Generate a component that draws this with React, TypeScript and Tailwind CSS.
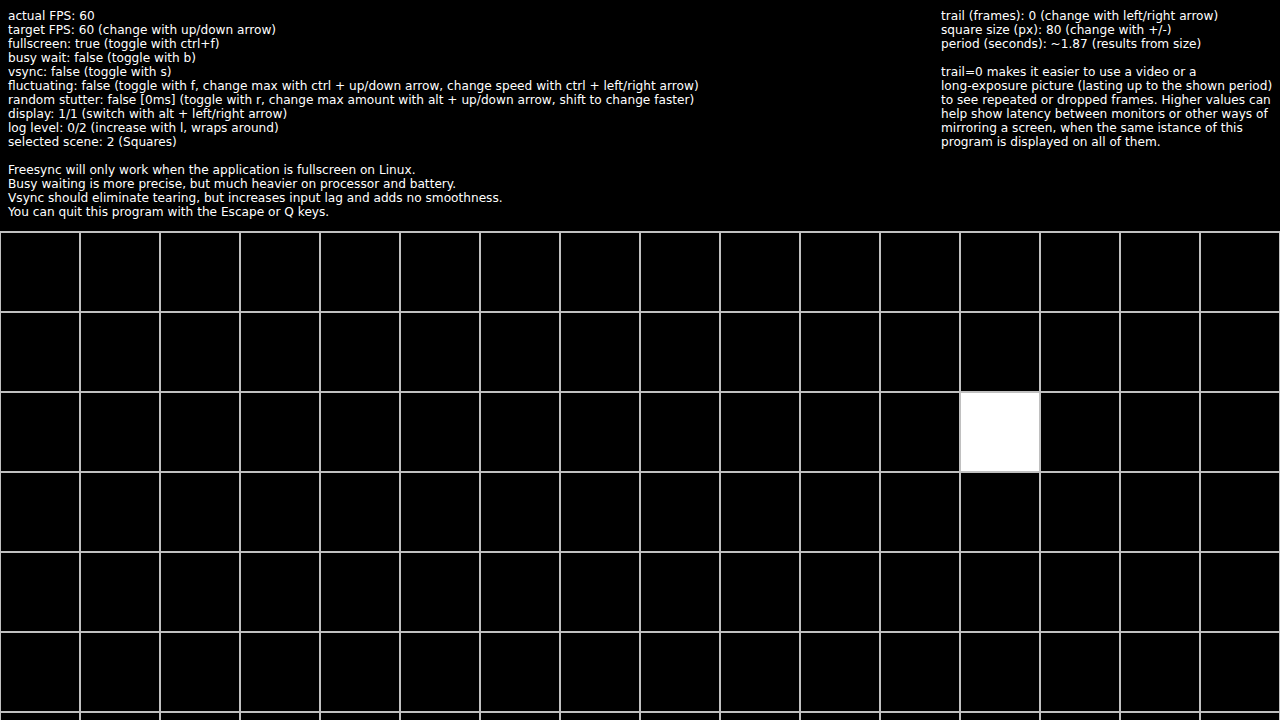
import React from "react";

const left = [
  "actual FPS: 60",
  "target FPS: 60 (change with up/down arrow)",
  "fullscreen: true (toggle with ctrl+f)",
  "busy wait: false (toggle with b)",
  "vsync: false (toggle with s)",
  "fluctuating: false (toggle with f, change max with ctrl + up/down arrow, change speed with ctrl + left/right arrow)",
  "random stutter: false [0ms] (toggle with r, change max amount with alt + up/down arrow, shift to change faster)",
  "display: 1/1 (switch with alt + left/right arrow)",
  "log level: 0/2 (increase with l, wraps around)",
  "selected scene: 2 (Squares)",
  "",
  "Freesync will only work when the application is fullscreen on Linux.",
  "Busy waiting is more precise, but much heavier on processor and battery.",
  "Vsync should eliminate tearing, but increases input lag and adds no smoothness.",
  "You can quit this program with the Escape or Q keys.",
];

const right = [
  "trail (frames): 0 (change with left/right arrow)",
  "square size (px): 80 (change with +/-)",
  "period (seconds): ~1.87 (results from size)",
  "",
  "trail=0 makes it easier to use a video or a",
  "long-exposure picture (lasting up to the shown period)",
  "to see repeated or dropped frames. Higher values can",
  "help show latency between monitors or other ways of",
  "mirroring a screen, when the same istance of this",
  "program is displayed on all of them.",
];

function Lines({ lines }: { lines: string[] }) {
  return (
    <div className="flex flex-col">
      {lines.map((l, i) => (
        <div key={i} className="h-[14px] leading-[14px] whitespace-pre">
          {l || "\u00a0"}
        </div>
      ))}
    </div>
  );
}

export default function App() {
  const cells = [];
  for (let r = 0; r < 7; r++) {
    for (let c = 0; c < 16; c++) {
      const lit = r === 2 && c === 12;
      cells.push(
        <div key={`${r}-${c}`} className={lit ? "bg-white" : "bg-black"} />
      );
    }
  }
  return (
    <div
      className="w-[1280px] h-[720px] overflow-hidden bg-black text-white text-[12.15px]"
      style={{ fontFamily: '"DejaVu Sans", sans-serif' }}
    >
      <div className="h-[231px] flex justify-between pt-[9px] pl-[8px]">
        <Lines lines={left} />
        <div className="w-[339px]">
          <Lines lines={right} />
        </div>
      </div>
      <div className="bg-[#c0c0c0] px-[1px] pt-[2px] grid grid-cols-[repeat(16,78px)] auto-rows-[78px] gap-[2px]">
        {cells}
      </div>
    </div>
  );
}
